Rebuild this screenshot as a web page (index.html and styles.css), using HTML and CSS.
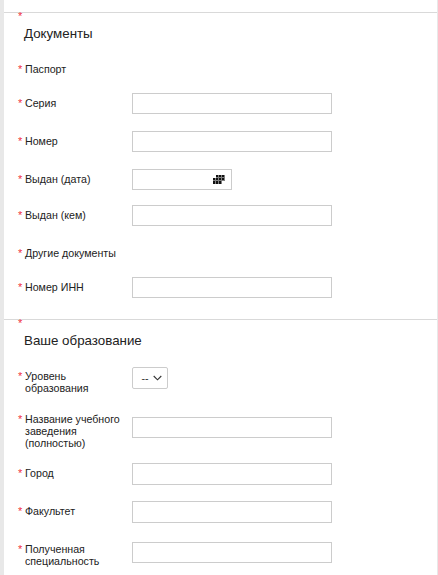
FILE: index.html
```html
<!DOCTYPE html>
<html lang="ru">
<head>
<meta charset="utf-8">
<title>Анкета</title>
<link rel="stylesheet" href="styles.css">
</head>
<body>
<main class="card">
  <section class="section section-docs">
    <span class="star star-top">*</span>
    <h2 class="heading">Документы</h2>
    <div class="row row-text row-passport"><span class="star">*</span><span class="label">Паспорт</span></div>
    <div class="row"><span class="star">*</span><label class="label">Серия</label><input class="field" type="text"></div>
    <div class="row"><span class="star">*</span><label class="label">Номер</label><input class="field" type="text"></div>
    <div class="row row-date"><span class="star">*</span><label class="label">Выдан (дата)</label>
      <div class="field field-date">
        <svg class="cal" width="12" height="9" viewBox="0 0 12 9" aria-hidden="true">
          <path d="M3 0h9v6H9v3H0V3h3z" fill="#808080"/>
          <path d="M3 0h2v2H3zM6 0h2v2H6zM9 0h2v2H9zM0 3h2v2H0zM3 3h2v2H3zM6 3h2v2H6zM9 3h2v2H9zM0 6h2v3H0zM3 6h2v3H3zM6 6h2v3H6z" fill="#111"/>
        </svg>
      </div>
    </div>
    <div class="row row-issued"><span class="star">*</span><label class="label">Выдан (кем)</label><input class="field" type="text"></div>
    <div class="row row-text row-other"><span class="star">*</span><span class="label">Другие документы</span></div>
    <div class="row row-last"><span class="star">*</span><label class="label">Номер ИНН</label><input class="field" type="text"></div>
  </section>
  <section class="section section-edu">
    <span class="star star-top">*</span>
    <h2 class="heading">Ваше образование</h2>
    <div class="row row-level"><span class="star">*</span><label class="label">Уровень образования</label>
      <div class="select">--<svg width="9" height="6" viewBox="0 0 9 6" aria-hidden="true"><path d="M.7 1l3.8 3.8L8.3 1" fill="none" stroke="#333" stroke-width="1.1"/></svg></div>
    </div>
    <div class="row row-school"><span class="star">*</span><label class="label">Название учебного заведения (полностью)</label><input class="field field-school" type="text"></div>
    <div class="row row-city"><span class="star">*</span><label class="label">Город</label><input class="field field-tall" type="text"></div>
    <div class="row row-faculty"><span class="star">*</span><label class="label">Факультет</label><input class="field field-tall" type="text"></div>
    <div class="row"><span class="star">*</span><label class="label">Полученная специальность</label><input class="field field-spec" type="text"></div>
  </section>
</main>
</body>
</html>
```
FILE: styles.css
```css
html, body {
  margin: 0;
  height: 575px;
  overflow: hidden;
  background: #e8e8e8;
}
body {
  font-family: "Liberation Sans", Arial, sans-serif;
  font-size: 10.67px;
  line-height: 12px;
  color: #222;
}
.card {
  margin: 0 1px 0 4px;
  padding-top: 12px;
  background: #fff;
  height: 563px;
}
.section {
  border-top: 1px solid #d9d9d9;
  padding-left: 14px;
}
.section-edu {
  margin-top: 21px;
}
.heading {
  margin: 0;
  padding: 7px 0 0 6px;
  font-size: 13.33px;
  line-height: 18px;
  font-weight: 400;
  color: #222;
}
.star {
  color: #f03040;
  width: 7px;
  flex: none;
  font-size: 11px;
  line-height: 12px;
}
.star-top {
  display: block;
  height: 5px;
  line-height: 6px;
}
.row {
  display: flex;
  align-items: flex-start;
  margin-bottom: 17px;
}
.row .star, .row .label {
  padding-top: 4px;
}
.label {
  width: 107px;
  flex: none;
}
.field {
  box-sizing: border-box;
  display: block;
  width: 200px;
  height: 21px;
  margin: 0;
  padding: 0;
  border: 1px solid #ccc;
  background: #fff;
  outline: none;
}
.field-tall {
  height: 22px;
}
.field-school {
  margin-top: 8px;
}
.field-spec {
  margin-top: 3px;
}
.field-date {
  width: 100px;
  display: flex;
  align-items: center;
  justify-content: flex-end;
  padding-right: 6px;
}
.select {
  box-sizing: border-box;
  width: 36px;
  height: 22px;
  margin-top: 1px;
  padding-left: 3px;
  border: 1px solid #ccc;
  border-radius: 2px;
  display: flex;
  align-items: center;
  justify-content: center;
  gap: 4px;
  color: #333;
}
.row-text {
  margin-bottom: 0;
}
.row-passport {
  height: 34px;
  padding-top: 15px;
}
.section-docs .heading {
  height: 19px;
}
.row-date {
  margin-bottom: 15px;
}
.row-issued {
  margin-bottom: 0;
}
.row-other {
  height: 51px;
  padding-top: 17px;
  box-sizing: border-box;
}
.row-last {
  margin-bottom: 0;
}
.row-level {
  margin-top: 16px;
  margin-bottom: 15px;
}
.row-school {
  margin-bottom: 14px;
}
.row-city {
  margin-bottom: 16px;
}
.row-faculty {
  margin-bottom: 16px;
}
```
